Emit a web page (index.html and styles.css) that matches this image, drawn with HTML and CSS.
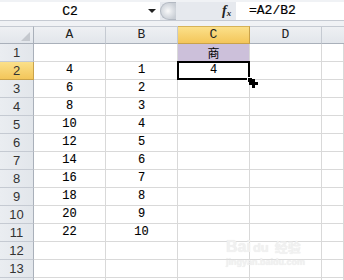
FILE: index.html
```html
<!DOCTYPE html>
<html>
<head>
<meta charset="utf-8">
<link rel="stylesheet" href="styles.css">
</head>
<body>
<div class="app">
  <div class="fbar">
    <div class="namebox"><span class="name">C2</span><span class="dd"></span></div>
    <div class="mid"><div class="splitter"></div><span class="fx">f<sub>x</sub></span></div>
    <div class="formula">=A2/B2</div>
  </div>
  <div class="strip"></div>
  <div class="sheet">
    <div class="corner"><span class="tri"></span></div>
    <div class="ch">A</div><div class="ch">B</div><div class="ch sel">C</div><div class="ch">D</div><div class="ch last"></div>

    <div class="rh">1</div><div class="c"></div><div class="c"></div><div class="c purple">商</div><div class="c"></div><div class="c"></div>
    <div class="rh sel">2</div><div class="c">4</div><div class="c">1</div><div class="c active">4<span class="frame"></span><span class="handle"></span><span class="cross"></span></div><div class="c"></div><div class="c"></div>
    <div class="rh">3</div><div class="c">6</div><div class="c">2</div><div class="c"></div><div class="c"></div><div class="c"></div>
    <div class="rh">4</div><div class="c">8</div><div class="c">3</div><div class="c"></div><div class="c"></div><div class="c"></div>
    <div class="rh">5</div><div class="c">10</div><div class="c">4</div><div class="c"></div><div class="c"></div><div class="c"></div>
    <div class="rh">6</div><div class="c">12</div><div class="c">5</div><div class="c"></div><div class="c"></div><div class="c"></div>
    <div class="rh">7</div><div class="c">14</div><div class="c">6</div><div class="c"></div><div class="c"></div><div class="c"></div>
    <div class="rh">8</div><div class="c">16</div><div class="c">7</div><div class="c"></div><div class="c"></div><div class="c"></div>
    <div class="rh">9</div><div class="c">18</div><div class="c">8</div><div class="c"></div><div class="c"></div><div class="c"></div>
    <div class="rh">10</div><div class="c">20</div><div class="c">9</div><div class="c"></div><div class="c"></div><div class="c"></div>
    <div class="rh">11</div><div class="c">22</div><div class="c">10</div><div class="c"></div><div class="c"></div><div class="c"></div>
    <div class="rh">12</div><div class="c"></div><div class="c"></div><div class="c"></div><div class="c"></div><div class="c"></div>
    <div class="rh">13</div><div class="c"></div><div class="c"></div><div class="c"></div><div class="c"></div><div class="c"></div>
    <div class="rh"></div><div class="c"></div><div class="c"></div><div class="c"></div><div class="c"></div><div class="c"></div>
  </div>
  <div class="watermark">
    <div class="wm-top"><span class="wm-bai">Bai</span><span class="wm-du">du</span><span class="wm-cn">经验</span></div>
    <div class="wm-url">jingyan.baidu.com</div>
  </div>
</div>
</body>
</html>
```
FILE: styles.css
```css
* { box-sizing: border-box; }
html, body { margin: 0; padding: 0; background: #fff; }
body { width: 344px; height: 280px; overflow: hidden; font-family: "Liberation Mono", monospace; }
.app { position: relative; width: 344px; height: 280px; overflow: hidden; }

.fbar { display: flex; height: 21px; background: #f0f2f5; padding-top: 2px; }
.namebox { width: 160px; background: #fff; border-bottom: 1px solid #c5cad2; display: flex; align-items: center; position: relative; }
.name { width: 140px; text-align: center; font-size: 13px; color: #000; -webkit-text-stroke: 0.2px #000; }
.dd { width: 0; height: 0; border-left: 4px solid transparent; border-right: 4px solid transparent; border-top: 4px solid #222; margin-left: 8px; }
.mid { width: 76px; display: flex; align-items: center; background: #e6e9ee; border-bottom: 1px solid #c5cad2; }
.splitter { width: 16px; height: 18px; border-radius: 9px 0 0 9px; border: 1px solid #b3b9c2; border-right: none; background: radial-gradient(circle at 7px 8px, #fafafa 0, #e2e5e9 4px, #c9ced5 9px); margin-top: -1px; }
.fx { margin-left: 46px; font-family: "Liberation Serif", serif; font-style: italic; font-weight: bold; font-size: 14px; color: #222; }
.fx sub { font-size: 9px; vertical-align: -1px; }
.formula { flex: 1; background: #fff; border-bottom: 1px solid #c5cad2; padding-left: 13px; font-size: 13px; line-height: 18px; color: #000; -webkit-text-stroke: 0.2px #000; }

.strip { height: 5px; background: #f0f2f5; }

.sheet { display: grid; grid-template-columns: 34px 72px 72px 72px 72px 1fr; grid-auto-rows: 18px; }
.corner, .ch { background: linear-gradient(#eef0f3, #e2e6eb); border-top: 1px solid #c5cad2; border-bottom: 1px solid #a9b0ba; border-right: 1px solid #c5cad2; }
.corner { position: relative; border-right-color: #a9b0ba; }
.tri { position: absolute; right: 3px; bottom: 2px; width: 0; height: 0; border-left: 9px solid transparent; border-bottom: 9px solid #c4c8ce; }
.ch { text-align: center; font-size: 13px; line-height: 16px; color: #222; }
.ch.sel { background: linear-gradient(#fbe08a, #f3c65a); border-color: #c9a24a; border-top-color: #d6b358; }
.ch.last { border-right: none; }

.rh { background: linear-gradient(90deg, #eaedf1, #e2e6eb); border-right: 1px solid #a9b0ba; border-bottom: 1px solid #c5cad2; font-family: "Liberation Sans", sans-serif; font-size: 13px; line-height: 17px; text-align: center; color: #333; }
.rh.sel { background: linear-gradient(#fbe08a, #f3c65a); border-right-color: #c9a24a; border-bottom-color: #c9a24a; }

.c { border-right: 1px solid #d9d9d9; border-bottom: 1px solid #d9d9d9; font-size: 12px; line-height: 17px; text-align: center; color: #000; -webkit-text-stroke: 0.12px #000; }
.c.purple { background: #ccc0da; font-family: "Noto Sans CJK SC", sans-serif; font-size: 12px; line-height: 17px; -webkit-text-stroke: 0; }

.active { position: relative; }
.frame { position: absolute; left: -1px; top: -1px; right: -1px; bottom: -1px; border: 2px solid #000; }
.handle { position: absolute; right: -4px; bottom: -4px; width: 6px; height: 6px; background: #000; border: 1px solid #fff; }
.cross { position: absolute; right: -9px; bottom: -9px; width: 9px; height: 9px; }
.cross::before, .cross::after { content: ""; position: absolute; background: #000; }
.cross::before { left: 3px; top: 0; width: 3px; height: 9px; }
.cross::after { left: 0; top: 3px; width: 9px; height: 3px; }

.watermark { position: absolute; left: 226px; top: 237px; width: 100px; color: #f1f1f1; text-shadow: 0 0 1px #e6e6e6; pointer-events: none; }
.wm-top { display: flex; align-items: baseline; font-family: "Liberation Sans", sans-serif; font-weight: bold; }
.wm-bai { font-size: 16px; }
.wm-du { font-size: 13px; margin-left: 2px; }
.wm-cn { font-family: "Noto Sans CJK SC", sans-serif; font-size: 13px; margin-left: 6px; }
.wm-url { font-family: "Liberation Sans", sans-serif; font-size: 9px; font-weight: bold; margin-top: 1px; }
```
